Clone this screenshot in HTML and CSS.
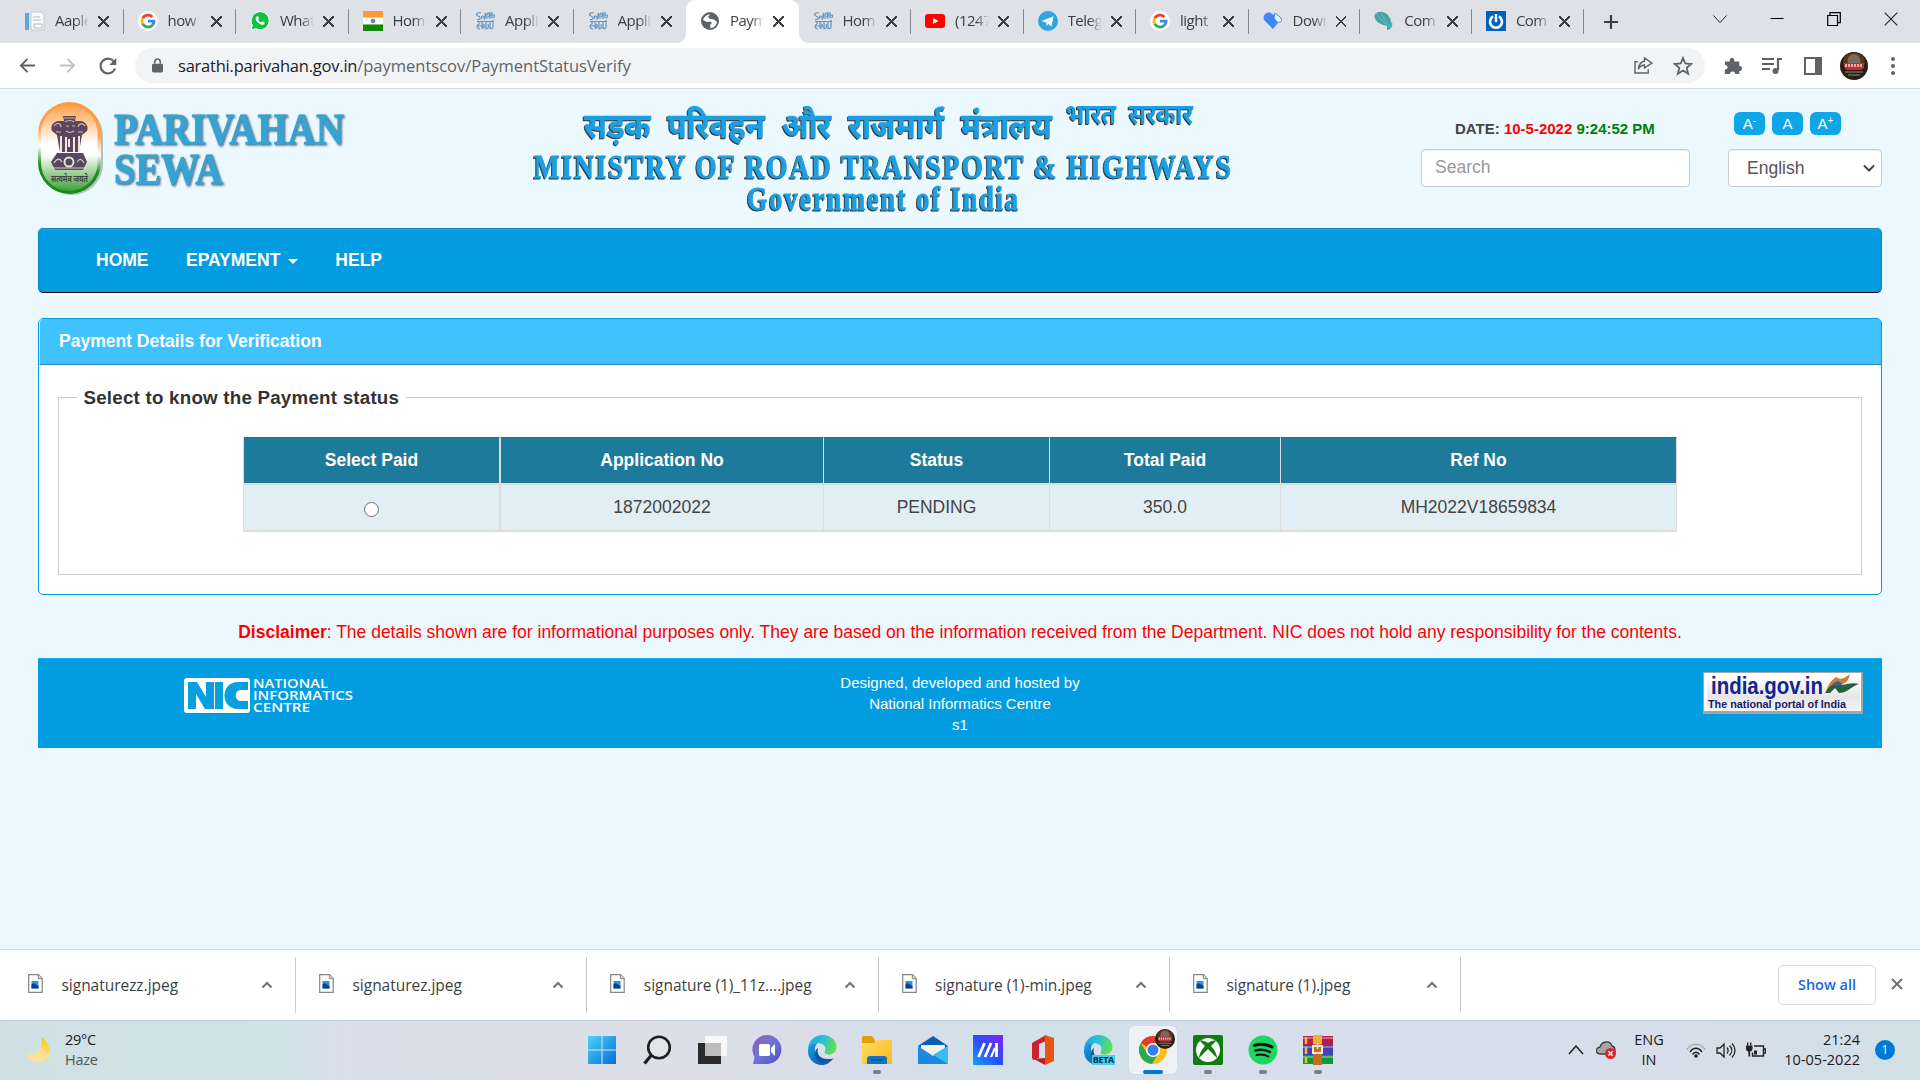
FILE: index.html
```html
<!DOCTYPE html>
<html lang="en">
<head>
<meta charset="utf-8">
<title>Payment Status Verify</title>
<link rel="stylesheet" href="styles.css">
</head>
<body>
<svg class="defs" width="0" height="0">
  <defs>
    <linearGradient id="edgeA" x1="0" y1="0.2" x2="1" y2="0.5"><stop offset="0" stop-color="#1aa7e0"/><stop offset="0.5" stop-color="#2bc3d2"/><stop offset="1" stop-color="#62e04a"/></linearGradient>
    <linearGradient id="edgeB" x1="0" y1="0" x2="1" y2="1"><stop offset="0" stop-color="#1b9de2"/><stop offset="1" stop-color="#0c4f9e"/></linearGradient>
    <linearGradient id="win" x1="0" y1="0" x2="1" y2="1"><stop offset="0" stop-color="#4fd0ff"/><stop offset="1" stop-color="#0072d2"/></linearGradient>
    <linearGradient id="chatg" x1="0" y1="0" x2="1" y2="1"><stop offset="0" stop-color="#8f5fb0"/><stop offset="0.5" stop-color="#6f74d8"/><stop offset="1" stop-color="#4a50c0"/></linearGradient>
    <linearGradient id="asus" x1="1" y1="0" x2="0" y2="1"><stop offset="0" stop-color="#8a22ff"/><stop offset="0.5" stop-color="#2a4df5"/><stop offset="1" stop-color="#149dff"/></linearGradient>
    <linearGradient id="fold" x1="0" y1="0" x2="1" y2="1"><stop offset="0" stop-color="#ffdc6a"/><stop offset="1" stop-color="#fbb813"/></linearGradient>
    <linearGradient id="moon" x1="0" y1="0" x2="0" y2="1"><stop offset="0" stop-color="#ffc800"/><stop offset="1" stop-color="#fbe6a8"/></linearGradient>
    <linearGradient id="tri" x1="0" y1="0" x2="0" y2="1"><stop offset="0" stop-color="#ffa149"/><stop offset="0.45" stop-color="#fff"/><stop offset="0.58" stop-color="#fff"/><stop offset="1" stop-color="#3da336"/></linearGradient>
    <linearGradient id="ring" x1="0.3" y1="0" x2="0.2" y2="1"><stop offset="0" stop-color="#ff9a35"/><stop offset="0.3" stop-color="#ffa550"/><stop offset="0.5" stop-color="#fff"/><stop offset="0.7" stop-color="#1c8f1c"/><stop offset="1" stop-color="#168a12"/></linearGradient>
    <linearGradient id="sewa" x1="0" y1="0" x2="0" y2="1"><stop offset="0" stop-color="#3ba3c4"/><stop offset="1" stop-color="#2fa5e3"/></linearGradient>

    <symbol id="google" viewBox="0 0 20 20"><circle cx="10" cy="10" r="10" fill="#fff"/><g fill="none" stroke-width="2.8"><path d="M14.4 5.9A6.1 6.1 0 0 0 4.7 7.2" stroke="#ea4335"/><path d="M4.7 7.2a6.1 6.1 0 0 0 0 5.7" stroke="#fbbc05"/><path d="M4.7 12.9a6.1 6.1 0 0 0 9.4 1.6" stroke="#34a853"/><path d="M14.1 14.5a6.1 6.1 0 0 0 2-4.4H10" stroke="#4285f4"/></g></symbol>
    <symbol id="sarathi" viewBox="0 0 20 20"><g fill="none" stroke="#5f97c2" stroke-width="1.2"><path d="M6 2C2 1 0 4 3 5s3 4-1 3.500M7 8c-2-4 3-4 2 0 1 1 2-5 1-6M12 8V3c3-3 3 3 1 3M15 8V1M17 1v6M15 4h4c1 1 0 3-1 3M2 10.500h17M4 10v3c-3 1-2 5 1 5M7 11v6c3 1 3-4 1-4M11 10v8c2 0 3-2 2-5M15 11v7M18 9v7c-1 3-3 1-3 0M2 15h7"/></g></symbol>
    <symbol id="edge" viewBox="0 0 30 30"><path d="M1 15C1 6 8 0 15.500 0 24 0 29.500 6 29.500 12c0 5-4 7.500-8 7.500-3 0-4.500-1-3.500-3C20 12 16 8 11 8 6 8 2 11 1 15z" fill="url(#edgeA)"/><path d="M1 15C2 9 7 8 11 8c-3 2-4 6-2 11 2.500 6 9 8 17 4.500C23 28 19 30 15 30 6 30 .5 23 1 15z" fill="url(#edgeB)"/><path d="M11 13c-2 7 3 13 15.500 10.500C20 30 8 29 8 19c0-3 1-5 3-6z" fill="#0d57a5"/></symbol>
    <symbol id="up" viewBox="0 0 12 8"><path d="M1.500 6.500 6 2l4.500 4.500" fill="none" stroke="#72767a" stroke-width="2.200"/></symbol>
    <symbol id="file" viewBox="0 0 15 19"><path d="M.7.700h9.800l3.700 3.700v13.900H.7z" fill="#fff" stroke="#858585" stroke-width="1.200"/><path d="M10.300.700v4h4" fill="#ddd" stroke="#858585"/><path d="M3.500 7h7v7.500h-7z" fill="#2b96dc"/><path d="M3.500 14.500v-4l2-1.500 5 3v2.500z" fill="#153f85"/></symbol>
    <symbol id="face" viewBox="0 0 28 28"><circle cx="14" cy="14" r="14" fill="#2b1d13"/><path d="M4 5a14 14 0 0 1 20 0l1 7H3z" fill="#5a3515"/><ellipse cx="14" cy="9" rx="6.500" ry="7" fill="#7b675d"/><path d="M4 11h20v5l-3 2H7l-3-2z" fill="#b43435"/><path d="M6 12v3m3-3v3m3-3v3m3-3v3m3-3v3m3-3v3" stroke="#fbdada" stroke-width="1.400"/><path d="M5 20h18M8 23h12" stroke="#8b8f84" stroke-width="1.200"/></symbol>
  </defs>
</svg>

<div class="tabstrip">
  <div class="tabs">
    <div class="tab"><svg class="fav" viewBox="0 0 20 20"><path d="M6 1h10l3 3v15H6z" fill="#f7f8f9" stroke="#c4c9cf"/><path d="M0 2h4v17H0z" fill="#5ea7d8"/><path d="M8 6h7M8 9h8M9 13h8v4H9z" fill="none" stroke="#b6bbc1"/></svg><span class="tt">Aaple</span><i class="x"></i></div>
    <div class="tab"><svg class="fav"><use href="#google"/></svg><span class="tt">how</span><i class="x"></i></div>
    <div class="tab"><svg class="fav" viewBox="0 0 20 20"><path d="M1 19l1.400-4.700A9 9 0 1 1 6 17.700z" fill="#0ac143" stroke="#fff"/><path d="M6.500 5.500c-2 2 0 5 2 6.500 2.500 2.200 5 2.500 6 .5l.1-1.300-2-1-1.300 1.200c-1.600-.5-2.800-1.800-3.200-2.900l1-1.200-.9-2z" fill="#fff"/></svg><span class="tt">What</span><i class="x"></i></div>
    <div class="tab"><svg class="fav" viewBox="0 0 20 20"><path fill="#ff9933" d="M0 0h20v7H0z"/><path fill="#fff" d="M0 6.500h20v7H0z"/><path fill="#138808" d="M0 13.500h20V20H0z"/><circle cx="10" cy="10" r="2.300" fill="#7777b5"/></svg><span class="tt">Hom</span><i class="x"></i></div>
    <div class="tab"><svg class="fav"><use href="#sarathi"/></svg><span class="tt">Appli</span><i class="x"></i></div>
    <div class="tab nosep"><svg class="fav"><use href="#sarathi"/></svg><span class="tt">Appli</span><i class="x"></i></div>
    <div class="tab active"><svg class="fav" viewBox="0 0 20 20"><circle cx="10" cy="10" r="9" fill="#5f6368"/><path d="M3 9c1-3 4-5.500 7-6l-2 3 2 2 4 .5 3 2.500c-1 4-3 5.500-6.500 6l-.5-3 2-2-2-1.500-3 .5z" fill="#fff"/><path d="M10 5l3-2 3 4-3 1z" fill="#5f6368"/></svg><span class="tt">Paym</span><i class="x"></i></div>
    <div class="tab"><svg class="fav"><use href="#sarathi"/></svg><span class="tt">Hom</span><i class="x"></i></div>
    <div class="tab"><svg class="fav" viewBox="0 0 20 20"><rect y="3" width="20" height="14" rx="3" fill="#f00"/><path d="M8 7l5.500 3L8 13z" fill="#fff"/></svg><span class="tt">(1247</span><i class="x"></i></div>
    <div class="tab"><svg class="fav" viewBox="0 0 20 20"><circle cx="10" cy="10" r="10" fill="#2ca5e0"/><path d="M3.500 10 15.500 5.200l-2 10.300-3.300-2.500-1.700 1.700-.5-3.200z" fill="#fff"/><path d="m8 11.500 5.500-4-4 4.500-1 2.500z" fill="#c4dcec"/></svg><span class="tt">Teleg</span><i class="x"></i></div>
    <div class="tab"><svg class="fav"><use href="#google"/></svg><span class="tt">light</span><i class="x"></i></div>
    <div class="tab last"><svg class="fav" viewBox="0 0 20 20"><path d="M10 18 1 9C-1 4 5-1 9 3l2 1v4h7z" fill="#4385f5"/><path d="m12 2 6 5c2 4-2 5-4 4l-3-4z" fill="#e9f1ff" stroke="#4385f5"/></svg><span class="tt">Down</span><i class="x"></i></div>
    <div class="tab last"><svg class="fav" viewBox="0 0 20 20"><path d="M1 3c5-5 15-1 16 8 0 3-2 4-3 4C5 14-1 9 1 3z" fill="#41a3a5"/><path d="M2 2l12 14M7 2l7 12" stroke="#86caca" stroke-width=".7"/><path d="m13 14 5-3c1 4-1 8-5 8z" fill="#4aafae"/></svg><span class="tt">Com</span><i class="x"></i></div>
    <div class="tab last"><svg class="fav" viewBox="0 0 20 20"><path fill="#0061bd" d="M0 0h20v20H0z"/><path d="M7 5.500a6 6 0 1 0 6 0" fill="none" stroke="#fff" stroke-width="2.600"/><path d="M10 3v8" stroke="#fff" stroke-width="2.500"/></svg><span class="tt">Com</span><i class="x"></i></div>
  </div>
  <svg class="plus" viewBox="0 0 16 16"><path d="M8 1v14M1 8h14" stroke="#3c4043" stroke-width="2.200"/></svg>
  <div class="winctl">
    <svg viewBox="0 0 14 14"><path d="m.5 3.500 6.500 7 6.500-7" fill="none" stroke="#222"/></svg>
    <svg viewBox="0 0 14 14"><path d="M.5 6.500h13" stroke="#000"/></svg>
    <svg viewBox="0 0 14 14"><path d="M.7 3.500h9.800v10H.7zM3 3.500v-2.800h10.300v10H10.500" fill="none" stroke="#000" stroke-width="1.200"/></svg>
    <svg viewBox="0 0 14 14"><path d="m.7.700 12.600 12.600m0-12.600L.7 13.300" stroke="#222" stroke-width="1.100"/></svg>
  </div>
</div>

<div class="toolbar">
  <svg class="ti back" viewBox="0 0 18 18"><path d="M17 9H2M9 2 2 9l7 7" fill="none" stroke="#5f6368" stroke-width="2"/></svg>
  <svg class="ti fwd" viewBox="0 0 18 18"><path d="M1 9h15M9 2l7 7-7 7" fill="none" stroke="#bdc1c6" stroke-width="2"/></svg>
  <svg class="ti rel" viewBox="0 0 18 18"><path d="M15.500 5.500A7.400 7.400 0 1 0 16 11.500" fill="none" stroke="#5f6368" stroke-width="2.100"/><path d="M17.300 1v7h-7z" fill="#5f6368"/></svg>
  <div class="omni">
    <svg class="lock" viewBox="0 0 12 16"><rect y="6" width="12" height="9.500" rx="1.500" fill="#5f6368"/><path d="M3 6V4a3 3 0 0 1 6 0v2" fill="none" stroke="#5f6368" stroke-width="1.700"/></svg>
    <span class="url"><b>sarathi.parivahan.gov.in</b>/paymentscov/PaymentStatusVerify</span>
    <svg class="share" viewBox="0 0 20 18"><path d="M4 5H1v12h14v-4M11 1l8 5.500-8 5V8.500c-3 0-5 1.500-6.500 4.500C5 8.500 7 5 11 4.500z" fill="none" stroke="#5f6368" stroke-width="1.500"/></svg>
    <svg class="star" viewBox="0 0 20 20"><path d="m10 2 2.300 5.500 6 .5-4.600 3.900 1.500 5.900L10 14.600l-5.200 3.200 1.500-5.900L1.700 8l6-.5z" fill="none" stroke="#5f6368" stroke-width="1.800"/></svg>
  </div>
  <svg class="t18 ext" viewBox="0 0 20 20"><path d="M1 5h5.500C5.500-.5 12-.5 11.500 5H17v5c4-.5 4 6 0 5.500V19h-4.500c0-4-6-4-6 0H1v-5c4 0 4-5 0-5z" fill="#5f6368"/></svg>
  <svg class="t20" viewBox="0 0 20 18"><path d="M0 2h12M0 7h12M0 12h8M15 2h5M16 2v11" stroke="#5f6368" stroke-width="2.200"/><circle cx="13.500" cy="14" r="3" fill="#5f6368"/></svg>
  <svg class="t18" viewBox="0 0 18 18"><path d="M1 1h16v16H1z" fill="none" stroke="#5f6368" stroke-width="2"/><path d="M11 1h6v16h-6z" fill="#5f6368"/></svg>
  <svg class="ava"><use href="#face"/></svg>
  <svg class="dots" viewBox="0 0 4 18"><g fill="#5f6368"><circle cx="2" cy="2" r="2"/><circle cx="2" cy="9" r="2"/><circle cx="2" cy="16" r="2"/></g></svg>
</div>

<main class="page">
  <header class="head">
    <svg class="logo" width="320" height="100" viewBox="38 100 320 100">
      <rect x="41" y="105" width="62" height="90" rx="31" fill="#6b7a80" opacity=".45"/>
      <rect x="38" y="102" width="63" height="92" rx="31.500" fill="url(#ring)"/>
      <rect x="41" y="105" width="56.500" height="86" rx="28" fill="url(#tri)"/>
      <g fill="#5b4560"><path d="M63 116h13l-1 5h6c5 1 8 6 6 10l-5 4-3 17H60l-3-17-5-4c-2-5 1-9 6-10h6z"/><path d="M57 153h26l4 9-4 8H55l-4-8z"/></g>
      <g fill="none" stroke="#d9b5a2" stroke-width="1.200"><path d="M64 118h11M65 122c2-2 7-2 9 0M66 126h3m3 0h3M66 131c3 2 5 2 8 0M54 126c3-4 7-3 7 1m17 0c1-4 5-4 7-1M56 132h5m17 0h5"/><path d="M61 136v16m5-15v15m8-15v15m5-16v16M69 139v8" stroke="#f3e5df" stroke-width="2"/><circle cx="69" cy="162" r="4.500" stroke="#d5e9d0" stroke-width="2"/><path d="M54 163c3-5 6-5 8-1m15 0c3-4 5-3 7 1M53 168h32" stroke="#c1dcbc"/></g>
      <text x="51" y="182" textLength="37" lengthAdjust="spacingAndGlyphs" class="motto">सत्यमेव जयते</text>
      <g class="sewa"><text x="114" y="144" textLength="230" lengthAdjust="spacingAndGlyphs">PARIVAHAN</text><text x="114" y="184" textLength="109" lengthAdjust="spacingAndGlyphs">SEWA</text></g>
    </svg>
    <svg class="ministry" width="710" height="120" viewBox="527 96 710 120">
      <text class="hi" x="584" y="137.500" textLength="468" lengthAdjust="spacingAndGlyphs">सड़क परिवहन और राजमार्ग मंत्रालय</text>
      <text class="hi2" x="1066" y="124" textLength="127" lengthAdjust="spacingAndGlyphs">भारत सरकार</text>
      <text class="en" x="534" y="177.500" textLength="699" lengthAdjust="spacingAndGlyphs">MINISTRY OF ROAD TRANSPORT &amp; HIGHWAYS</text>
      <text class="en" x="747" y="209.500" textLength="273" lengthAdjust="spacingAndGlyphs">Government of India</text>
    </svg>
    <div class="controls">
      <div class="date">DATE: <span class="red">10-5-2022</span> <span class="green">9:24:52 PM</span></div>
      <div class="sizes"><span>A<sup>-</sup></span><span>A</span><span>A<sup>+</sup></span></div>
      <div class="search">Search</div>
      <div class="lang">English<svg viewBox="0 0 12 8"><path d="m1 1.500 5 5 5-5" fill="none" stroke="#444" stroke-width="2"/></svg></div>
    </div>
  </header>
  <nav class="nav"><span>HOME</span><span>EPAYMENT<i class="caret"></i></span><span>HELP</span></nav>
  <section class="panel">
    <h3>Payment Details for Verification</h3>
    <fieldset>
      <legend>Select to know the Payment status</legend>
      <table>
        <colgroup><col class="c1"><col class="c2"><col class="c3"><col class="c4"><col class="c5"></colgroup>
        <thead><tr><th>Select Paid</th><th>Application No</th><th>Status</th><th>Total Paid</th><th>Ref No</th></tr></thead>
        <tbody><tr><td><i class="radio"></i></td><td>1872002022</td><td>PENDING</td><td>350.0</td><td>MH2022V18659834</td></tr></tbody>
      </table>
    </fieldset>
  </section>
  <p class="disc"><b>Disclaimer</b>: The details shown are for informational purposes only. They are based on the information received from the Department. NIC does not hold any responsibility for the contents.</p>
  <footer class="foot">
    <svg class="nic" width="172" height="38" viewBox="183 677 172 38">
      <rect x="184" y="678" width="66" height="35" rx="3" fill="#fff"/>
      <path d="M188 682h9l9 15v-15h8v27h-9l-9-15v15h-8zM215 682h8v27h-8zM248 690v-8h-10c-18 0-18 27 0 27h10v-8h-7c-7 0-7-11 0-11z" fill="#079fe0"/>
      <g class="nict"><text x="253" y="688" textLength="75" lengthAdjust="spacingAndGlyphs">NATIONAL</text><text x="253" y="700" textLength="100" lengthAdjust="spacingAndGlyphs">INFORMATICS</text><text x="253" y="711.500" textLength="57" lengthAdjust="spacingAndGlyphs">CENTRE</text></g>
    </svg>
    <div class="by">Designed, developed and hosted by<br>National Informatics Centre<br>s1</div>
    <svg class="gov" width="160" height="42" viewBox="0 0 160 42">
      <defs><linearGradient id="silver" x1="0" y1="0" x2="0" y2="1"><stop offset="0" stop-color="#fff"/><stop offset=".6" stop-color="#e6e6e9"/><stop offset="1" stop-color="#f4f4f4"/></linearGradient></defs>
      <path d="M0 0h160v42H0z" fill="#a5a6aa"/><path d="M1 1h157v38H1z" fill="#fff"/><path d="M4 4h153v35H4z" fill="url(#silver)"/>
      <text x="8" y="22" class="gov1" textLength="112" lengthAdjust="spacingAndGlyphs">india.gov.in</text>
      <text x="5" y="36" class="gov2" textLength="138" lengthAdjust="spacingAndGlyphs">The national portal of India</text>
      <path d="M123 19c3-8 7-12 10-14 4 3 8 2 14-3l-2 6c-3 4-6 5-10 3-4 3-7 6-10 9z" fill="#cf7c35"/><path d="M122 21c5-8 9-10 13-9 5 3 12-3 21 0-7 2-12 9-20 9l-4-5-5 5z" fill="#26603f"/><path d="M129 12l6-3 5 3-5 2z" fill="#4056ae"/>
    </svg>
  </footer>
</main>

<div class="downloads">
  <div class="dl"><svg class="fi"><use href="#file"/></svg><span>signaturezz.jpeg</span><svg class="up"><use href="#up"/></svg></div>
  <div class="dl"><svg class="fi"><use href="#file"/></svg><span>signaturez.jpeg</span><svg class="up"><use href="#up"/></svg></div>
  <div class="dl"><svg class="fi"><use href="#file"/></svg><span>signature (1)_11z....jpeg</span><svg class="up"><use href="#up"/></svg></div>
  <div class="dl"><svg class="fi"><use href="#file"/></svg><span>signature (1)-min.jpeg</span><svg class="up"><use href="#up"/></svg></div>
  <div class="dl"><svg class="fi"><use href="#file"/></svg><span>signature (1).jpeg</span><svg class="up"><use href="#up"/></svg></div>
  <div class="showall">Show all</div>
  <svg class="dlx" viewBox="0 0 12 12"><path d="m1 1 10 10m0-10L1 11" stroke="#6b6f73" stroke-width="2"/></svg>
</div>

<div class="taskbar">
  <svg class="moon" viewBox="0 0 28 26"><path d="M15 0c8 6 11 13 6 20-5 7-16 7-20-1 9 2 17-7 14-19z" fill="url(#moon)"/><path d="M1 19c3-5 8-1 10-6 4-4 9-1 9 3 5 0 6 5 1 6-5 5-16 4-20-3z" fill="#fbe09a" opacity=".75"/></svg>
  <div class="weather">29°C<br><span>Haze</span></div>
  <div class="apps">
    <div><svg viewBox="0 0 30 30"><path d="M1 1h13.500v13.500H1zM15.500 1H29v13.500H15.500zM1 15.500h13.500V29H1zM15.500 15.500H29V29H15.500z" fill="url(#win)"/></svg></div>
    <div><svg viewBox="0 0 30 30"><circle cx="17" cy="12.500" r="10.800" fill="#e8eaf0" fill-opacity=".5" stroke="#1f1f1f" stroke-width="2.600"/><path d="m9.500 20-7 8.500" stroke="#1f1f1f" stroke-width="3.200"/></svg></div>
    <div><svg viewBox="0 0 30 30"><path d="M1 8h23v21H1z" fill="#2a2a2a"/><path d="M8 1h22v20H8z" fill="#fbfbfb" opacity=".9"/><path d="M8 8h16v13H8z" fill="#bdbdbd"/></svg></div>
    <div><svg viewBox="0 0 30 30"><path d="M1 29l1.500-7A14.500 14.500 0 1 1 15 29z" fill="url(#chatg)"/><rect x="7" y="9" width="11" height="12" rx="1.500" fill="#fff"/><path d="m19 13 4-4v12l-4-4z" fill="#fff"/></svg></div>
    <div><svg><use href="#edge"/></svg></div>
    <div class="run"><svg viewBox="0 0 30 30"><path d="M0 3c0-2 1-2 3-2h7l3 4v8H0z" fill="#e0a009"/><path d="M0 8h12l3-3h15v24H0z" fill="url(#fold)"/><path d="M5 29v-5c0-2 1-3 3-3h14c2 0 3 1 3 3v5z" fill="#1173c4"/><path d="M9 25h12" stroke="#0b4f94" stroke-width="1.500"/></svg></div>
    <div><svg viewBox="0 0 30 30"><path d="M0 11 15 1l15 10-15 10z" fill="#0a5fb0"/><path d="M3 10h24v5L15 24 3 15z" fill="#f2f2f2"/><path d="M0 11v18h30V11L15 21z" fill="#1b8ade"/><path d="M30 11v18L7 15l8 5z" fill="#36bff4"/></svg></div>
    <div><svg viewBox="0 0 30 30"><path d="M0 0h30v30H0z" fill="url(#asus)"/><g stroke="#fff" stroke-width="2.800" fill="none"><path d="m5.500 22 6-14M12 22l6-14"/><path d="m18 22 4-9" stroke-width="2.200"/><path d="M23.500 8v14"/></g></svg></div>
    <div><svg viewBox="0 0 30 30"><path d="M4 8 18 0v6l-7 3v14l-6 2-1-2z" fill="#cb2430"/><path d="m17 0 9 3v23l-9 4V0z" fill="#e95510"/><path d="m6 24 11-1v7z" fill="#c3191f"/></svg></div>
    <div><svg><use href="#edge"/></svg><em>BETA</em></div>
    <div class="run sel"><svg viewBox="0 0 30 30"><circle cx="15" cy="15" r="14" fill="#fbc116"/><path d="M15 15 2.700 8.200A14 14 0 0 1 27.200 8H15z" fill="#e33b2e"/><path d="m9 18-6.300-9.800A14 14 0 0 0 14 29l6-10z" fill="#2da94f"/><circle cx="15" cy="15" r="7" fill="#fff"/><circle cx="15" cy="15" r="5.500" fill="#3b7ded"/></svg><svg class="badge"><use href="#face"/></svg></div>
    <div class="run"><svg viewBox="0 0 30 30"><rect width="30" height="30" rx="2" fill="#107c10"/><circle cx="15" cy="15" r="12" fill="#fff"/><path d="M7 6c2-1 5 0 8 2 3-2 6-3 8-2l-5 5c4 4 6 9 6 12l-9-9-9 9c0-3 2-8 6-12z" fill="#107c10"/></svg></div>
    <div class="run"><svg viewBox="0 0 30 30"><circle cx="15" cy="15" r="14.500" fill="#1ed760"/><g fill="none" stroke="#111" stroke-linecap="round"><path d="M6.500 10.500c6-2 12-1.500 17.500 1.500" stroke-width="3"/><path d="M7.500 15.500c5-1.500 10-1 14.500 1.500" stroke-width="2.500"/><path d="M8.500 20c4-1 8-.5 12 1.500" stroke-width="2"/></g></svg></div>
    <div class="run"><svg viewBox="0 0 30 30"><path d="M0 1h30v9H0z" fill="#b51f50"/><path d="M0 10h30v10H0z" fill="#4142b7"/><path d="M0 20h30v9H0z" fill="#13953a"/><path d="M0 3h30M0 12h30M0 22h30" stroke="#fff" stroke-opacity=".3" stroke-width="2"/><path d="M3 2v7m0 3v7m0 3v6" stroke="#f3bd28" stroke-width="2.500"/><path d="M10 0h9v30h-9z" fill="#c66d1b"/><path d="M10 0h9v9h-9z" fill="#e5b32e"/><path d="M10 11h9v7h-9z" fill="none" stroke="#f3e9db" stroke-width="2"/><path d="M14.500 8v6" stroke="#ddd" stroke-width="1.500"/></svg></div>
  </div>
  <div class="tray">
    <svg class="tchev" viewBox="0 0 16 10"><path d="m1 9 7-8 7 8" fill="none" stroke="#222" stroke-width="1.500"/></svg>
    <svg class="cloud" viewBox="0 0 20 18"><path d="M5 13C-1 13-1 7 4 6 6 0 14-1 16 5c4 1 4 7 0 8z" fill="#a6a6a6" stroke="#3c3c3c" stroke-width="1.300"/><circle cx="14.500" cy="12.500" r="5.500" fill="#dc2331"/><path d="m12.300 10.300 4.400 4.400m0-4.400-4.400 4.400" stroke="#fff" stroke-width="1.300"/></svg>
    <div class="lng">ENG<br>IN</div>
    <svg class="wifi" viewBox="0 0 20 16"><g fill="none" stroke-width="1.400"><path d="M1 7c5-7 13-7 18 0" stroke="#a8adb6"/><path d="M4 9.500c3.500-5 8.500-5 12 0M6.500 12c2-3 5-3 7 0" stroke="#222"/></g><circle cx="10" cy="13.500" r="1.800" fill="#222"/></svg>
    <svg class="spk" viewBox="0 0 20 16"><path d="M1 5.500h3l4-4v13l-4-4H1zM11 5c1.500 2 1.500 4 0 6M13.500 3c3 3 3 7 0 10M16 1c4 4 4 10 0 14" fill="none" stroke="#222" stroke-width="1.300"/></svg>
    <svg class="bat" viewBox="0 0 20 16"><path d="M8 3.500h9.500v10H6.500V10M17.500 6.500H19.500v4h-2" fill="none" stroke="#222" stroke-width="1.400"/><path d="M0 3h6.500v3c0 2-1 3-2.400 3v5H2.400V9C1 9 0 8 0 6z" fill="#222"/><path d="M1.700 0v3m3-3v3" stroke="#222" stroke-width="1.300"/><path d="M8 8h3v4H8z" fill="#222"/></svg>
    <div class="clock">21:24<br>10-05-2022</div>
    <div class="note">1</div>
  </div>
</div>
</body>
</html>
```

FILE: styles.css
```css
* { box-sizing: border-box; }
body { margin: 0; width: 1920px; height: 1080px; overflow: hidden; display: flex; flex-direction: column; background: #ebf9ff; font-family: "Liberation Sans", Arial, sans-serif; font-size: 17.5px; color: #333; }
svg { display: block; flex: none; }
.defs { position: absolute; }

/* Browser chrome */
.tabstrip { height: 43px; flex: none; background: #dee1e6; display: flex; padding-left: 11px; font-family: "Open Sans", "Noto Sans", sans-serif; }
.tabs { display: flex; width: 1573px; height: 43px; }
.tab { flex: 0 0 112.500px; min-width: 0; height: 43px; display: flex; align-items: center; padding: 0 14px 1px 14px; position: relative; }
.last { flex-basis: 111.700px; }
.tab::after { content: ""; position: absolute; right: 0; top: 9px; width: 1px; height: 25px; background: #85888c; }
.nosep::after { display: none; }
.fav { width: 20px; height: 20px; }
.tt { margin-left: 10px; width: 34px; height: 24px; white-space: nowrap; font-size: 15px; line-height: 23px; letter-spacing: -.5px; color: #3c4043; -webkit-mask-image: linear-gradient(90deg, #000 62%, transparent); mask-image: linear-gradient(90deg, #000 62%, transparent); }
.x { width: 11px; height: 11px; margin-left: 9px; background: linear-gradient(45deg, transparent 43%, #3c4043 43%, #3c4043 57%, transparent 57%), linear-gradient(-45deg, transparent 43%, #3c4043 43%, #3c4043 57%, transparent 57%); }
.active { background: #fff; border-radius: 9px 9px 0 0; }
.active::after, .active::before { content: ""; position: absolute; top: auto; bottom: 0; width: 9px; height: 9px; }
.active::before { left: -9px; background: radial-gradient(circle at 0 0, transparent 8.500px, #fff 9px); }
.active::after { right: -9px; background: radial-gradient(circle at 100% 0, transparent 8.500px, #fff 9px); }
.plus { width: 16px; height: 16px; margin: 14px 0 0 19px; }
.winctl { display: flex; gap: 43px; margin: 12px 0 0 94px; }
.winctl svg { width: 14px; height: 14px; }
.toolbar { height: 46px; flex: none; background: #fff; border-bottom: 1px solid #d5d9dd; display: flex; align-items: center; padding-left: 19px; }
.ti { width: 17px; height: 17px; margin-right: 23px; }
.rel { margin-right: 18px; width: 18px; height: 18px; }
.omni { width: 1570px; height: 35px; border-radius: 18px; background: #f1f3f4; display: flex; align-items: center; padding: 0 12.500px 0 17px; font-family: "Open Sans", "Noto Sans", sans-serif; }
.lock { width: 11px; height: 15px; }
.url { flex: 1; margin-left: 15px; font-size: 16.500px; letter-spacing: -.01px; color: #5f6368; white-space: nowrap; }
.url b { font-weight: 400; color: #202124; letter-spacing: -.22px; }
.share { width: 19px; height: 17px; margin-right: 20px; }
.star { width: 20px; height: 20px; }
.t18 { width: 18px; height: 18px; margin-left: 22px; }
.ext { margin-left: 18.500px; }
.t20 { width: 20px; height: 18px; margin-left: 20px; }
.ava { width: 28px; height: 28px; margin-left: 18px; }
.dots { width: 4px; height: 18px; margin-left: 23px; }

/* Page */
.page { height: 860px; flex: none; padding: 0 38px; background: #ebf9ff; }
.head { height: 139px; display: flex; align-items: flex-start; }
.logo { margin-top: 11px; }
.motto { font: 700 9px "Noto Sans Devanagari", "Noto Sans", sans-serif; fill: #444; }
.sewa { font: 700 45px "Liberation Serif", serif; fill: url(#sewa); stroke: #3b9fce; stroke-width: .8px; filter: drop-shadow(1px 1px 1px #4f6172); }
.ministry { margin: 7px 0 0 169px; fill: #1f9fe2; filter: drop-shadow(-1px 1.500px .7px #333); }
.hi { font: 700 35px "Noto Sans Devanagari", "Noto Sans", sans-serif; word-spacing: 10px; stroke: #1f9fe2; stroke-width: .5px; }
.hi2 { font: 700 29px "Noto Sans Devanagari", "Noto Sans", sans-serif; word-spacing: 8px; }
.en { font: 700 34px "Liberation Serif", serif; letter-spacing: 2.500px; stroke: #1f9fe2; stroke-width: .8px; }
.controls { margin: 23px 0 0 184px; width: 461px; display: grid; grid-template-columns: 269px 154px; column-gap: 38px; grid-template-rows: 23px 38px; row-gap: 14px; }
.date { font-size: 15px; font-weight: 700; line-height: 34px; height: 23px; padding-left: 34px; color: #444; white-space: nowrap; }
.red { color: #f00; } .green { color: #008000; }
.sizes { display: flex; gap: 7px; padding-left: 6px; }
.sizes span { width: 31px; height: 23px; border-radius: 6px; background: #0ea5e9; color: #fff; font-size: 15px; line-height: 23px; text-align: center; }
.sizes sup { font-size: 10px; line-height: 0; vertical-align: 5px; }
.search, .lang { height: 38px; border: 1px solid #ccc; border-radius: 4px; background: #fff; box-shadow: inset 0 1px 1px rgba(0,0,0,.08); }
.search { color: #999; line-height: 35px; padding-left: 13px; }
.lang { color: #555; line-height: 37px; padding: 0 6px 0 18px; display: flex; align-items: center; justify-content: space-between; }
.lang svg { width: 12px; height: 8px; }
.nav { height: 65px; border: 1px solid #1583bd; border-bottom-color: #080808; border-radius: 5px; background: #029de0; box-shadow: inset 0 1px 0 #1aa5e2; color: #fff; font-weight: 700; display: flex; align-items: center; gap: 37.500px; padding-left: 57px; }
.caret { display: inline-block; border: 5px solid transparent; border-top-color: #fff; border-bottom: 0; margin-left: 7.500px; vertical-align: 2px; }
.panel { margin-top: 25px; height: 277px; border: 1px solid #029de0; border-radius: 5px; background: #fff; }
.panel h3 { margin: 0; height: 46px; border: 1px solid #d5f3ff; border-width: 0 0 0 1px; border-bottom: 1px solid #2e82bf; border-radius: 4px 4px 0 0; background: #40c2ff; color: #fff; font-size: 17.500px; line-height: 45px; padding-left: 19px; }
fieldset { margin: 22px 19px 0 19px; height: 188px; border: 1px solid #ccc; padding: 0; min-width: 0; }
legend { margin-left: 18px; padding: 0 6.500px; height: 21px; font-size: 18.750px; font-weight: 700; line-height: 21px; letter-spacing: .22px; color: #333; white-space: nowrap; }
table { margin: 29px 0 0 184px; width: 1434px; table-layout: fixed; border-collapse: separate; border-spacing: 0; border-left: 1px solid #ddd; color: #444; }
.c1 { width: 257px; } .c2 { width: 323px; } .c3 { width: 226px; } .c4 { width: 231px; } .c5 { width: 396px; }
th { height: 48px; padding: 0; background: #1e7a9a; color: #fff; border-top: 1px solid #1b72ab; border-right: 1px solid #ddd; border-bottom: 2px solid #ddd; }
td { height: 47px; padding: 0 0 1px; text-align: center; background: #e1eef4; border-right: 1px solid #ddd; border-bottom: 2px solid #ddd; }
th:first-child, td:first-child { border-right-width: 2px; }
.radio { display: block; width: 15px; height: 15px; margin: 5px auto 0; border: 1px solid #707070; border-radius: 50%; background: #fff; }
.disc { margin: 27px 0 16px; height: 20px; line-height: 20px; text-align: center; color: #f00; white-space: nowrap; }
.foot { height: 90px; background: #029de0; border-top: 1px solid #19b1f3; display: flex; align-items: flex-start; padding: 13px 19px 0 145px; color: #fff; }
.nic { margin-top: 5px; }
.nict { font: 600 12px "Open Sans", sans-serif; fill: #fff; }
.by { font-size: 15px; line-height: 21px; text-align: center; width: 260px; margin-left: 475px; }
.gov { margin-left: auto; }
.gov1 { font: 700 23px "Liberation Sans", sans-serif; fill: #14248a; }
.gov2 { font: 700 11px "Liberation Sans", sans-serif; fill: #191b68; }

/* Downloads shelf */
.downloads { height: 71px; flex: none; background: #fff; border-top: 1px solid #d5dadd; display: flex; align-items: center; font-family: "Open Sans", "Noto Sans", sans-serif; color: #3c4043; }
.dl { width: 291.300px; height: 56px; border-right: 1px solid #c8cacc; display: flex; align-items: center; padding: 0 22px 0 23px; font-size: 15.500px; letter-spacing: -.03px; }
.dl:first-child { width: 296px; padding: 0 22px 0 28px; }
.fi { width: 15px; height: 19px; margin-bottom: 3px; }
.dl span { flex: 1; margin-left: 18.500px; white-space: nowrap; }
.up { width: 12px; height: 8px; }
.showall { margin-left: auto; width: 98px; height: 40px; border: 1px solid #dadce0; border-radius: 5px; color: #1a66e0; font-size: 14.500px; font-weight: 600; text-align: center; line-height: 37px; margin-bottom: 1px; }
.dlx { width: 12px; height: 12px; margin: 0 17px 2px 15px; }

/* Taskbar */
.taskbar { height: 60px; flex: none; border-top: 1px solid #c3cbd7; background: linear-gradient(90deg, #cfe0e2 0, #d0e4e9 280px, #dadfec 350px, #dddfe5 650px, #d8deeb 850px, #d1e1e9 1020px, #d7dfec 1200px, #d7deeb 1600px, #d1e0e7 1920px); display: flex; align-items: center; padding-bottom: 1px; font-family: "Open Sans", "Noto Sans", sans-serif; font-size: 14px; line-height: 20px; color: #1b1b1b; }
.moon { width: 28px; height: 26px; margin-left: 26px; }
.weather { margin-left: 11px; width: 80px; font-size: 14.500px; letter-spacing: -.3px; }
.weather span { color: #555; }
.apps { display: flex; gap: 7.100px; margin-left: 433px; }
.apps div { width: 48px; height: 48px; display: flex; align-items: center; justify-content: center; position: relative; }
.apps svg { width: 30px; height: 30px; }
.apps .sel { background: #eef1f7; border-radius: 5px; box-shadow: 0 0 1px #aeb5c0; }
.run::after { content: ""; position: absolute; bottom: 0; left: 20px; width: 8px; height: 4px; border-radius: 2px; background: #7b7f87; }
.sel::after { left: 14px; width: 20px; background: #0078d7; }
.apps .badge { position: absolute; left: 26px; top: 3px; width: 20px; height: 20px; }
.apps em { position: absolute; left: 18px; bottom: 9px; padding: 0 1px; background: #41d2f0; color: #06253b; font: 700 9px/10px "Open Sans", sans-serif; letter-spacing: -.4px; }
.tray { margin-left: auto; display: flex; align-items: center; }
.tchev { width: 16px; height: 10px; margin-right: 12px; }
.cloud { width: 20px; height: 18px; }
.lng { width: 40px; margin: 0 17px 0 13px; text-align: center; font-size: 14.500px; }
.wifi, .spk, .bat { width: 20px; height: 17px; }
.wifi, .spk { margin-right: 10px; }
.clock { width: 94px; text-align: right; font-size: 14.500px; }
.note { width: 20px; height: 20px; border-radius: 50%; background: #0078d7; color: #fff; text-align: center; font-size: 12px; margin: 0 25px 0 15px; }
```
